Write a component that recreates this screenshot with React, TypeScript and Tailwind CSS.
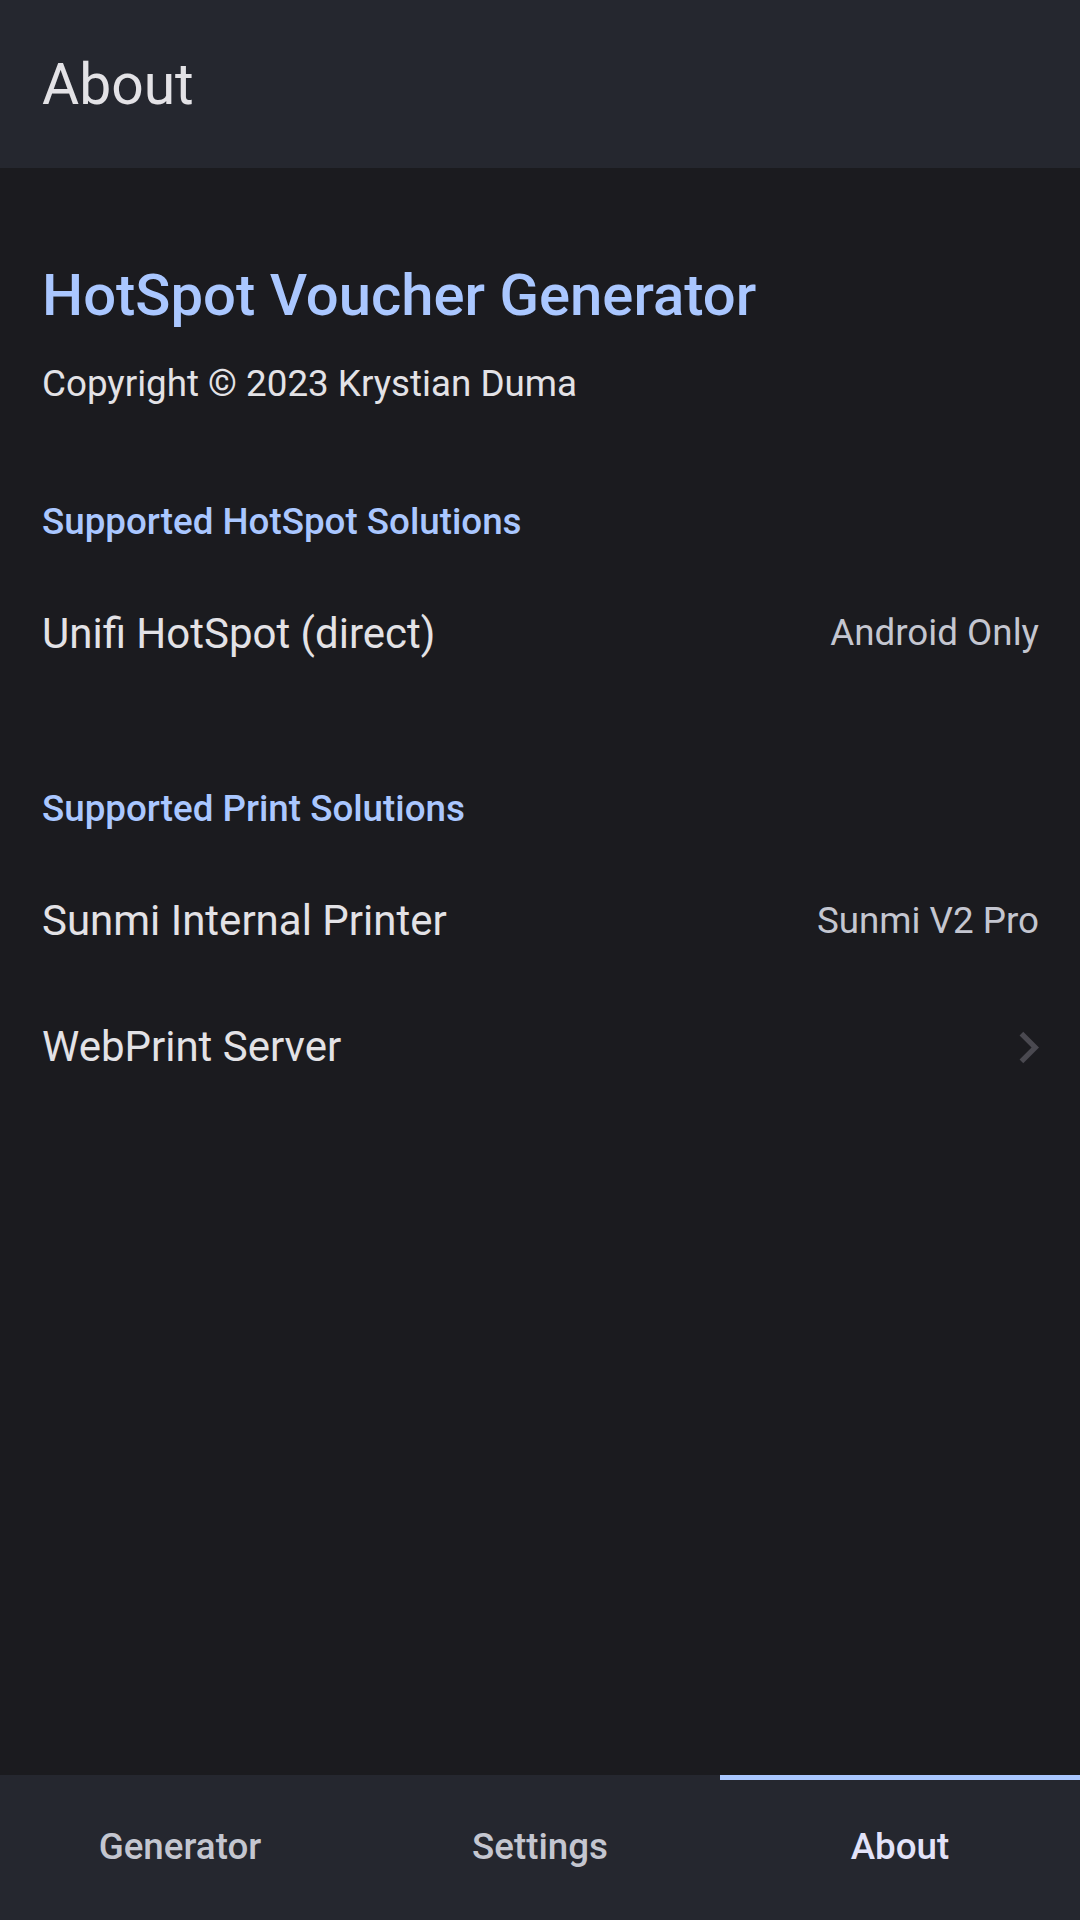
import { useState } from "react";

type Row = { label: string; trailing?: string; chevron?: boolean };

const hotspot: Row[] = [{ label: "Unifi HotSpot (direct)", trailing: "Android Only" }];
const print: Row[] = [
  { label: "Sunmi Internal Printer", trailing: "Sunmi V2 Pro" },
  { label: "WebPrint Server", chevron: true },
];

const tabs = ["Generator", "Settings", "About"];

// material chevron_right, 24dp box
function Chevron() {
  return (
    <svg width="63" height="63" viewBox="0 0 24 24" className="-mr-[21px]">
      <path d="M10 6 8.59 7.41 13.17 12l-4.58 4.59L10 18l6-6z" fill="#4a4950" />
    </svg>
  );
}

function ListRow({ row }: { row: Row }) {
  return (
    <div className="flex h-[126px] items-center justify-between">
      <span className="text-[42px] leading-none text-[#e3e2e6]">{row.label}</span>
      {row.trailing ? (
        <span className="text-[36.75px] leading-none text-[#c4c6d0]">{row.trailing}</span>
      ) : null}
      {row.chevron ? <Chevron /> : null}
    </div>
  );
}

export default function App() {
  const [tab, setTab] = useState(2);

  return (
    <div
      className="flex h-[1920px] w-[1080px] flex-col bg-[#1b1b1f]"
      style={{ fontFamily: "Roboto, 'Noto Sans', sans-serif" }}
    >
      <header className="flex h-[168px] shrink-0 items-center bg-[#25272f] px-[42px]">
        <h1 className="text-[57px] leading-none text-[#e3e2e6]">About</h1>
      </header>

      <main className="flex-1 px-[42px] pr-[41px] pt-[98px]">
        <div className="text-[58px] font-medium leading-none text-[#aac7ff]">
          HotSpot Voucher Generator
        </div>
        <div className="mt-[42px] text-[36.75px] leading-none text-[#e3e2e6]">
          Copyright © 2023 Krystian Duma
        </div>

        <div className="mt-[101px] text-[36.75px] font-medium leading-none text-[#aac7ff]">
          Supported HotSpot Solutions
        </div>
        <div className="mt-[30px]">
          {hotspot.map((r) => (
            <ListRow key={r.label} row={r} />
          ))}
        </div>

        <div className="mt-[94px] text-[36.75px] font-medium leading-none text-[#aac7ff]">
          Supported Print Solutions
        </div>
        <div className="mt-[31px]">
          {print.map((r) => (
            <ListRow key={r.label} row={r} />
          ))}
        </div>
      </main>

      <nav className="flex h-[145px] shrink-0 bg-[#25272f]">
        {tabs.map((t, i) => (
          <button
            key={t}
            onClick={() => setTab(i)}
            className={
              "relative flex flex-1 items-center justify-center text-[36.75px] font-medium leading-none " +
              (tab === i ? "text-[#e2e2f9]" : "text-[#c4c6d0]")
            }
          >
            {tab === i ? <span className="absolute left-0 right-0 top-0 h-[5px] bg-[#aac7ff]" /> : null}
            {t}
          </button>
        ))}
      </nav>
    </div>
  );
}
